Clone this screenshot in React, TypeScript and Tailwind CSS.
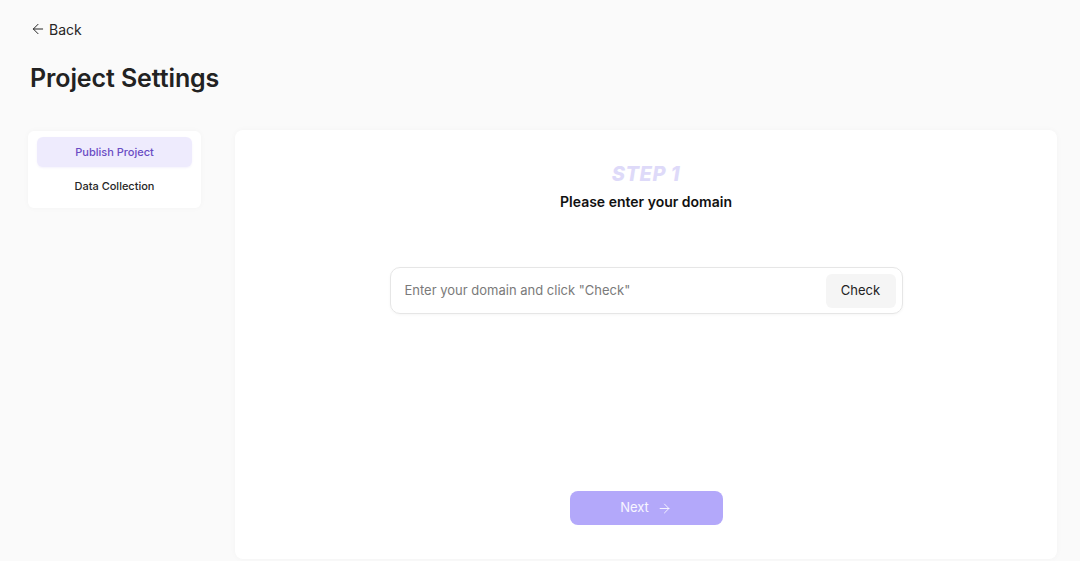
import { ArrowLeft, ArrowRight } from "lucide-react";

export default function App() {
  return (
    <div
      className="min-h-[561px] h-[561px] overflow-hidden bg-[#fafafa] text-[#1f1f1f] flex flex-col"
      style={{ fontFamily: "Inter, 'Noto Sans', sans-serif" }}
    >
      {/* Encabezado */}
      <div className="pl-[30px] pt-[20px]">
        <button className="flex items-center gap-[3px] text-[14px] text-[#262626] h-[18px]">
          <ArrowLeft className="w-[16px] h-[16px]" strokeWidth={1.5} />
          Back
        </button>
        <h1 className="mt-[25px] text-[25px] font-semibold leading-[30px] tracking-[-0.1px] text-[#222]">
          Project Settings
        </h1>
      </div>

      <div className="flex gap-[34px] pl-[28px] pr-[23px] mt-[37px] flex-1 pb-[2px]">
        {/* Menú lateral */}
        <div className="w-[173px] self-start bg-white rounded-[6px] shadow-[0_0_6px_rgba(0,0,0,0.03)] px-[9px] pt-[6px] pb-[5px] mt-[1px]">
          <div className="h-[30px] rounded-[6px] bg-[#eeebfd] shadow-[0_1px_2px_rgba(110,90,220,0.08)] flex items-center justify-center text-[11px] font-medium text-[#6a4cc4]">
            Publish Project
          </div>
          <div className="h-[34px] flex items-center justify-center text-[11px] font-medium text-[#262626] mt-[2px]">
            Data Collection
          </div>
        </div>

        {/* Tarjeta principal */}
        <div className="flex-1 bg-white rounded-[8px] shadow-[0_0_6px_rgba(0,0,0,0.03)] flex flex-col items-center pt-[32px] pb-[34px]">
          <div className="text-[20px] font-extrabold italic tracking-[0.5px] text-[#dedaf9] leading-[24px]">
            STEP 1
          </div>
          <div className="mt-[7px] text-[14px] font-semibold text-[#111] leading-[18px]">
            Please enter your domain
          </div>

          <div className="mt-[56px] w-[513px] h-[47px] rounded-[10px] border border-[#e6e6e6] shadow-[0_1px_3px_rgba(0,0,0,0.04)] flex items-center pl-[14px] pr-[6px]">
            <input
              className="flex-1 text-[13px] text-[#333] placeholder:text-[#7a7a7a] outline-none bg-transparent"
              placeholder={'Enter your domain and click "Check"'}
            />
            <button className="w-[70px] h-[34px] rounded-[6px] bg-[#f5f5f5] text-[13px] text-[#222]">
              Check
            </button>
          </div>

          <div className="flex-1" />

          <button className="w-[153px] h-[34px] rounded-[8px] bg-[#b3a8fa] text-white/90 text-[13px] flex items-center justify-center gap-[8px]">
            Next
            <ArrowRight className="w-[15px] h-[15px]" strokeWidth={1.5} />
          </button>
        </div>
      </div>
    </div>
  );
}
